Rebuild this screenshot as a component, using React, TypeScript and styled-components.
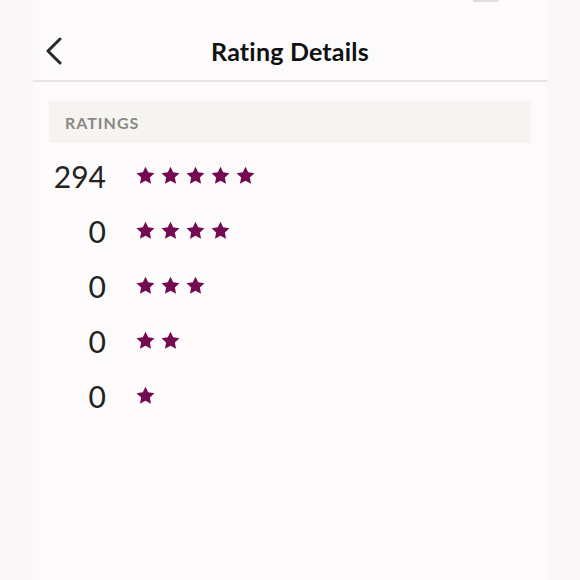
import React from "react";
import styled, { createGlobalStyle } from "styled-components";

const GlobalStyle = createGlobalStyle`
  html, body {
    margin: 0;
    padding: 0;
    background: #f9f7f7;
    font-family: Lato, "Open Sans", sans-serif;
  }
`;

const Screen = styled.div`
  position: relative;
  margin: 0 33px;
  min-height: 580px;
  background: #fcfafa;
`;

const Notch = styled.div`
  position: absolute;
  top: 0;
  left: 440px;
  width: 25px;
  height: 2px;
  background: #dedcdc;
`;

const Header = styled.header`
  display: grid;
  grid-template-columns: 1fr auto 1fr;
  align-items: center;
  height: 82px;
  border-bottom: 2px solid #e6e4e4;
  box-sizing: border-box;
  padding-top: 22px;
`;

const BackButton = styled.button`
  justify-self: start;
  display: flex;
  align-items: center;
  background: none;
  border: 0;
  padding: 0 0 0 12px;
  cursor: pointer;
`;

const Title = styled.h1`
  margin: 0;
  font-family: Lato, sans-serif;
  font-weight: 700;
  font-size: 25px;
  color: #111;
  letter-spacing: 0.2px;
`;

const Content = styled.section`
  padding: 19px 16px 0;
`;

const SectionBar = styled.div`
  display: flex;
  align-items: center;
  height: 42px;
  padding-left: 16px;
  background: #f5f4f1;
  color: #8b8886;
  font-size: 16px;
  font-weight: 700;
  letter-spacing: 1px;
`;

const List = styled.div`
  margin-top: 5px;
`;

const Row = styled.div`
  display: grid;
  grid-template-columns: 57px auto;
  column-gap: 30px;
  align-items: center;
  height: 55px;
`;

const Count = styled.span`
  text-align: right;
  font-size: 30px;
  color: #222;
`;

const Stars = styled.div`
  display: flex;
  gap: 6px;
`;

const Star = () => (
  <svg width="19" height="19" viewBox="0 0 24 24" fill="#740b52">
    <path d="M12 .8l3.4 7.2 7.9 1-5.8 5.5 1.5 7.9L12 18.6l-7 3.8 1.5-7.9L.7 9l7.9-1z" />
  </svg>
);

const ratings = [
  { stars: 5, count: 294 },
  { stars: 4, count: 0 },
  { stars: 3, count: 0 },
  { stars: 2, count: 0 },
  { stars: 1, count: 0 },
];

function App(): JSX.Element {
  return (
    <>
      <GlobalStyle />
      <Screen>
        <Notch />
        <Header>
          <BackButton aria-label="Back">
            <svg width="18" height="28" viewBox="0 0 18 28" fill="none">
              <path
                d="M15 2L3 14l12 12"
                stroke="#2a2a2a"
                strokeWidth="3"
                strokeLinecap="round"
                strokeLinejoin="round"
              />
            </svg>
          </BackButton>
          <Title>Rating Details</Title>
          <span />
        </Header>
        <Content>
          <SectionBar>RATINGS</SectionBar>
          <List>
            {ratings.map((r) => (
              <Row key={r.stars}>
                <Count>{r.count}</Count>
                <Stars>
                  {Array.from({ length: r.stars }).map((_, i) => (
                    <Star key={i} />
                  ))}
                </Stars>
              </Row>
            ))}
          </List>
        </Content>
      </Screen>
    </>
  );
}

export default App;
